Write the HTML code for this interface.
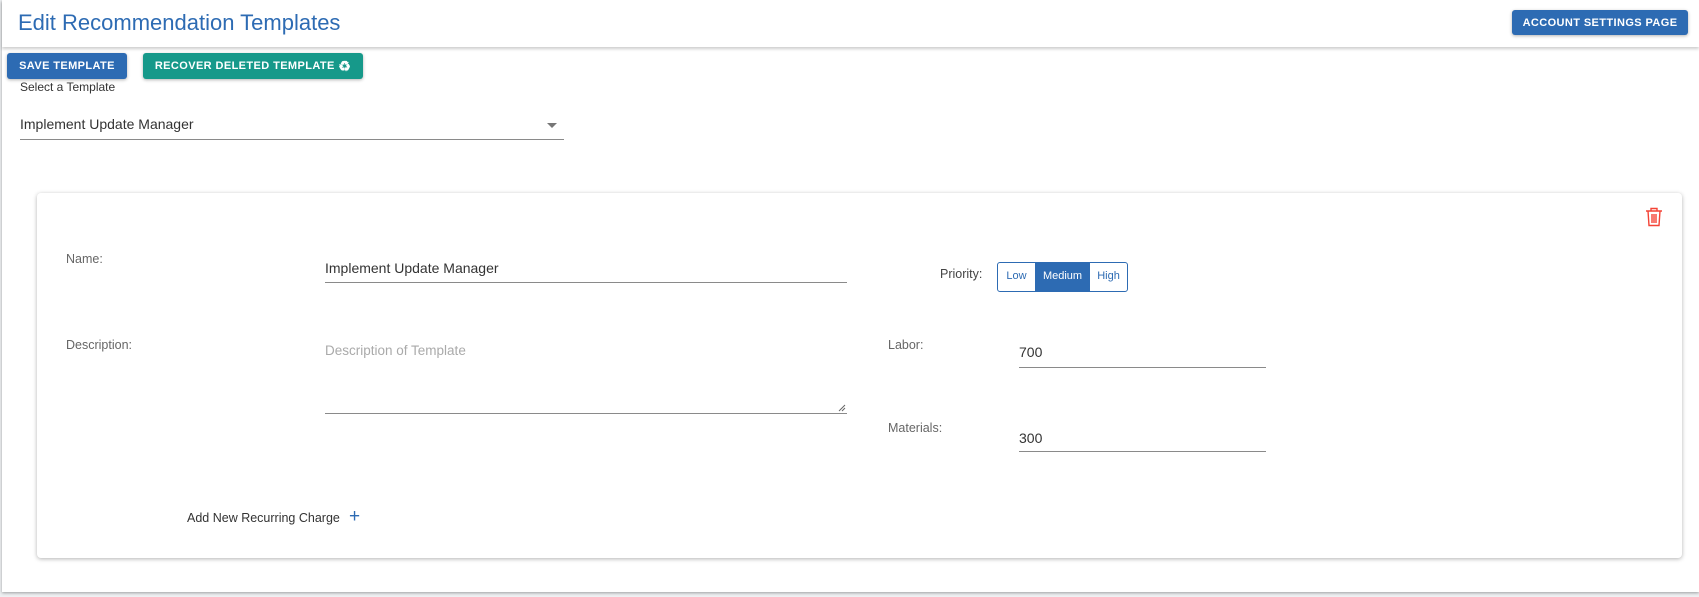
<!DOCTYPE html>
<html><head><meta charset="utf-8"><style>
*{box-sizing:border-box;margin:0;padding:0}
body{width:1699px;height:597px;background:#eef0f2;font-family:"Liberation Sans",Arial,sans-serif;position:relative;overflow:hidden;color:#333}
.outer{position:absolute;left:2px;top:0;width:1697px;height:592px;background:#fff;box-shadow:0 1px 3px rgba(0,0,0,.35)}
.header{position:absolute;left:0;top:0;width:100%;height:47px;background:#fff;box-shadow:0 2px 3px rgba(0,0,0,.2)}
.title{position:absolute;left:16px;top:10px;font-size:22px;color:#2d6bb3}
.btn{position:absolute;color:#fff;font-weight:bold;font-size:11px;letter-spacing:.4px;border-radius:3px;box-shadow:0 1px 3px rgba(0,0,0,.3);display:flex;align-items:center;justify-content:center}
.a{position:absolute;font-size:14px}
.lbl{color:#666;font-size:12.5px}
.line{position:absolute;height:1px;background:#8a8a8a}
.card{position:absolute;left:35px;top:193px;width:1645px;height:365px;background:#fff;border-radius:4px;box-shadow:0 1px 4px rgba(0,0,0,.3)}
</style></head><body>
<div class="outer">
<div class="header"><div class="title">Edit Recommendation Templates</div>
<div class="btn" style="left:1510px;top:10px;width:176px;height:25px;background:#2d6bb3">ACCOUNT SETTINGS PAGE</div></div>
<div class="btn" style="left:5px;top:53px;width:120px;height:26px;background:#2d6bb3">SAVE TEMPLATE</div>
<div class="btn" style="left:141px;top:53px;width:220px;height:26px;background:#16998a">RECOVER DELETED TEMPLATE&nbsp;<span style="font-size:14px">♻</span></div>
<div class="a" style="left:18px;top:80px;font-size:12px;color:#333">Select a Template</div>
<div class="a" style="left:18px;top:116px;font-size:14px;color:#333">Implement Update Manager</div>
<div style="position:absolute;left:545px;top:123px;width:0;height:0;border-left:5px solid transparent;border-right:5px solid transparent;border-top:5px solid #777"></div>
<div class="line" style="left:18px;top:139px;width:544px"></div>
<div class="card">
<svg style="position:absolute;left:1608px;top:14px" width="18" height="20" viewBox="0 0 18 20" fill="none" stroke="#f44336" stroke-width="1.4"><path d="M1 4h16M6 4V1.5h6V4M3 4l1 14.5h10L15 4M7 7v9M9 7v9M11 7v9"/></svg>
</div>
<div class="a lbl" style="left:64px;top:252px">Name:</div>
<div class="a" style="left:323px;top:260px;font-size:14px">Implement Update Manager</div>
<div class="line" style="left:323px;top:282px;width:522px"></div>
<div class="a" style="left:938px;top:267px;font-size:12.5px;color:#444">Priority:</div>
<div style="position:absolute;left:995px;top:262px;width:131px;height:30px;border:1px solid #2d6bb3;border-radius:3px;display:flex;font-size:11px;overflow:hidden">
<div style="width:37px;color:#2d6bb3;text-align:center;padding-top:7px">Low</div>
<div style="width:55px;background:#2d6bb3;color:#fff;text-align:center;padding-top:7px">Medium</div>
<div style="flex:1;color:#2d6bb3;text-align:center;padding-top:7px">High</div></div>
<div class="a lbl" style="left:64px;top:338px">Description:</div>
<div class="a" style="left:323px;top:343px;font-size:13.5px;color:#aaa">Description of Template</div>
<div class="line" style="left:323px;top:413px;width:522px"></div>
<svg style="position:absolute;left:836px;top:404px" width="8" height="8"><path d="M1 7L7 1M4 7L7 4" stroke="#666"/></svg>
<div class="a lbl" style="left:886px;top:338px">Labor:</div>
<div class="a" style="left:1017px;top:344px;font-size:14px">700</div>
<div class="line" style="left:1017px;top:367px;width:247px"></div>
<div class="a lbl" style="left:886px;top:421px">Materials:</div>
<div class="a" style="left:1017px;top:430px;font-size:14px">300</div>
<div class="line" style="left:1017px;top:451px;width:247px"></div>
<div class="a" style="left:185px;top:511px;font-size:12.5px;color:#333">Add New Recurring Charge</div>
<div class="a" style="left:347px;top:506px;font-size:19px;color:#2d6bb3">+</div>
</div>
</body></html>
